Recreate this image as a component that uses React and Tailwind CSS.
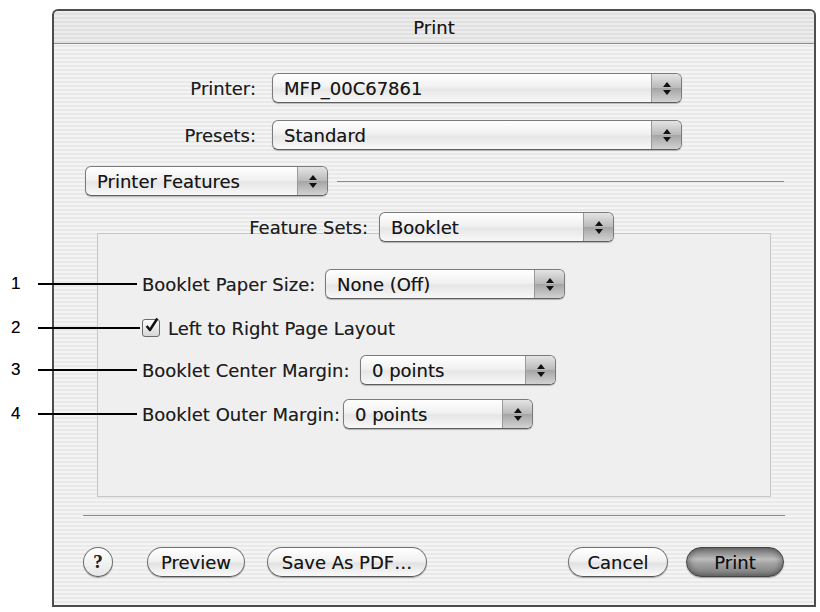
import React from "react";

const font = { fontFamily: '"DejaVu Sans", "Lucida Grande", Verdana, sans-serif' };

function Stepper() {
  return (
    <div className="flex h-full w-[30px] shrink-0 flex-col items-center justify-center gap-[3px] rounded-r-[5px] border-l border-[#9a9a9a] bg-[linear-gradient(to_bottom,#e4e4e4,#b9b9b9_50%,#a5a5a5_51%,#d2d2d2)]">
      <svg width="8" height="5" viewBox="0 0 8 5"><path d="M4 0L8 5H0z" fill="#111" /></svg>
      <svg width="8" height="5" viewBox="0 0 8 5"><path d="M0 0H8L4 5z" fill="#111" /></svg>
    </div>
  );
}

function Popup({ value, width }) {
  return (
    <div
      className="flex h-[30px] shrink-0 items-stretch rounded-[6px] border border-[#7a7a7a] border-b-[#5e5e5e] bg-[linear-gradient(to_bottom,#ffffff,#f1f1f1_45%,#e6e6e6_55%,#f8f8f8)] shadow-[0_1px_1px_rgba(0,0,0,0.25)]"
      style={{ width }}
    >
      <div className="flex flex-1 items-center whitespace-nowrap pl-[11px] text-[18px] text-[#161616]">{value}</div>
      <Stepper />
    </div>
  );
}

function Pill({ children, w, dark }) {
  return (
    <div
      className={`flex h-[30px] items-center justify-center rounded-full border text-[18px] shadow-[0_1px_1px_rgba(0,0,0,0.3)] ${
        dark
          ? "border-[#444] text-[#0e0e0e] bg-[linear-gradient(to_bottom,#6c6c6c,#bdbdbd_40%,#a4a4a4_55%,#8a8a8a_80%,#6a6a6a)] shadow-[inset_6px_0_6px_-4px_rgba(0,0,0,0.35),inset_-6px_0_6px_-4px_rgba(0,0,0,0.35),0_1px_1px_rgba(0,0,0,0.3)]"
          : "border-[#6f6f6f] border-b-[#555] text-[#161616] bg-[linear-gradient(to_bottom,#ffffff,#f2f2f2_45%,#e2e2e2_55%,#fafafa)]"
      }`}
      style={{ width: w }}
    >
      {children}
    </div>
  );
}

function Callout({ n, top, lineEnd }) {
  return (
    <div className="absolute left-0 flex items-center" style={{ top: top - 11 }}>
      <span className="w-[38px] pl-[11px] text-[17px] leading-[22px] text-black" style={{ fontFamily: '"Liberation Sans", Arial, sans-serif' }}>
        {n}
      </span>
      <div className="h-[2px] bg-black" style={{ width: lineEnd - 38 }} />
    </div>
  );
}

export default function App() {
  return (
    <div className="relative h-[612px] w-[820px] overflow-hidden bg-white [text-shadow:0_0_0.6px_rgba(0,0,0,0.45)]" style={font}>
      <div className="ml-[52px] mt-[9px] flex h-[598px] w-[764px] flex-col rounded-t-[6px] border-2 border-[#4d4d4d] bg-[repeating-linear-gradient(to_bottom,#f4f4f4_0px,#f4f4f4_2px,#e9e9e9_2px,#e9e9e9_4px)]">
        {/* title bar */}
        <div className="flex h-[33px] shrink-0 items-center justify-center rounded-t-[5px] border-b border-[#8c8c8c] bg-[repeating-linear-gradient(to_bottom,#ececec_0px,#ececec_2px,#e0e0e0_2px,#e0e0e0_4px)] text-[18px] text-[#161616]">
          Print
        </div>

        {/* printer / presets */}
        <div className="mt-[29px] flex flex-col gap-[17px]">
          <div className="flex items-center">
            <div className="w-[218px] pr-[16px] text-right text-[18px] text-[#1e1e1e]">Printer:</div>
            <Popup value="MFP_00C67861" width={410} />
          </div>
          <div className="flex items-center">
            <div className="w-[218px] pr-[16px] text-right text-[18px] text-[#1e1e1e]">Presets:</div>
            <Popup value="Standard" width={410} />
          </div>
        </div>

        {/* pane selector with rule */}
        <div className="mt-[16px] flex items-center pl-[31px] pr-[30px]">
          <Popup value="Printer Features" width={243} />
          <div className="ml-[9px] h-px flex-1 bg-[#8a8a8a]" />
        </div>

        {/* feature sets + group box */}
        <div className="mt-[16px] px-[43px]">
          <div className="relative z-10 flex items-center">
            <div className="w-[282px] pr-[11px] text-right text-[18px] text-[#1e1e1e]">Feature Sets:</div>
            <Popup value="Booklet" width={235} />
          </div>
          <div className="-mt-[9px] flex h-[264px] flex-col border border-[#c6c6c6] bg-[#efefef] pl-[44px] pt-[35px]">
            <div className="flex items-center">
              <div className="w-[183px] whitespace-nowrap text-[18px] text-[#1e1e1e]">Booklet Paper Size:</div>
              <Popup value="None (Off)" width={240} />
            </div>
            <div className="mt-[19px] flex h-[20px] items-center">
              <div className="flex h-[18px] w-[18px] items-center justify-center rounded-[3px] border border-[#6a6a6a] bg-[linear-gradient(to_bottom,#fdfdfd,#d6d6d6)]">
                <svg width="17" height="19" viewBox="0 0 17 19" className="-mt-[5px] ml-[2px]">
                  <path d="M2 10l4 5L15 1" fill="none" stroke="#111" strokeWidth="3" strokeLinejoin="round" />
                </svg>
              </div>
              <div className="whitespace-nowrap pl-[8px] text-[18px] text-[#1e1e1e]">Left to Right Page Layout</div>
            </div>
            <div className="mt-[17px] flex items-center">
              <div className="w-[218px] whitespace-nowrap text-[18px] text-[#1e1e1e]">Booklet Center Margin:</div>
              <Popup value="0 points" width={196} />
            </div>
            <div className="mt-[14px] flex items-center">
              <div className="w-[201px] whitespace-nowrap text-[18px] text-[#1e1e1e]">Booklet Outer Margin:</div>
              <Popup value="0 points" width={190} />
            </div>
          </div>
        </div>

        {/* bottom rule */}
        <div className="mx-[29px] mt-[18px] h-px bg-[#8a8a8a]" />

        {/* buttons */}
        <div className="mt-[31px] flex items-center pl-[29px] pr-[30px]">
          <div className="flex h-[30px] w-[30px] items-center justify-center rounded-full border border-[#6f6f6f] border-b-[#555] bg-[linear-gradient(to_bottom,#ffffff,#e6e6e6)] text-[19px] font-bold text-[#222] shadow-[0_1px_1px_rgba(0,0,0,0.3)]" style={{ fontFamily: '"Liberation Serif", serif' }}>
            ?
          </div>
          <div className="ml-[34px]"><Pill w={98}>Preview</Pill></div>
          <div className="ml-[22px]"><Pill w={160}>Save As PDF…</Pill></div>
          <div className="flex-1" />
          <Pill w={100}>Cancel</Pill>
          <div className="ml-[18px]"><Pill w={98} dark>Print</Pill></div>
        </div>
      </div>

      {/* numbered callouts */}
      <Callout n="1" top={284} lineEnd={137} />
      <Callout n="2" top={328} lineEnd={140} />
      <Callout n="3" top={370} lineEnd={137} />
      <Callout n="4" top={414} lineEnd={137} />
    </div>
  );
}
